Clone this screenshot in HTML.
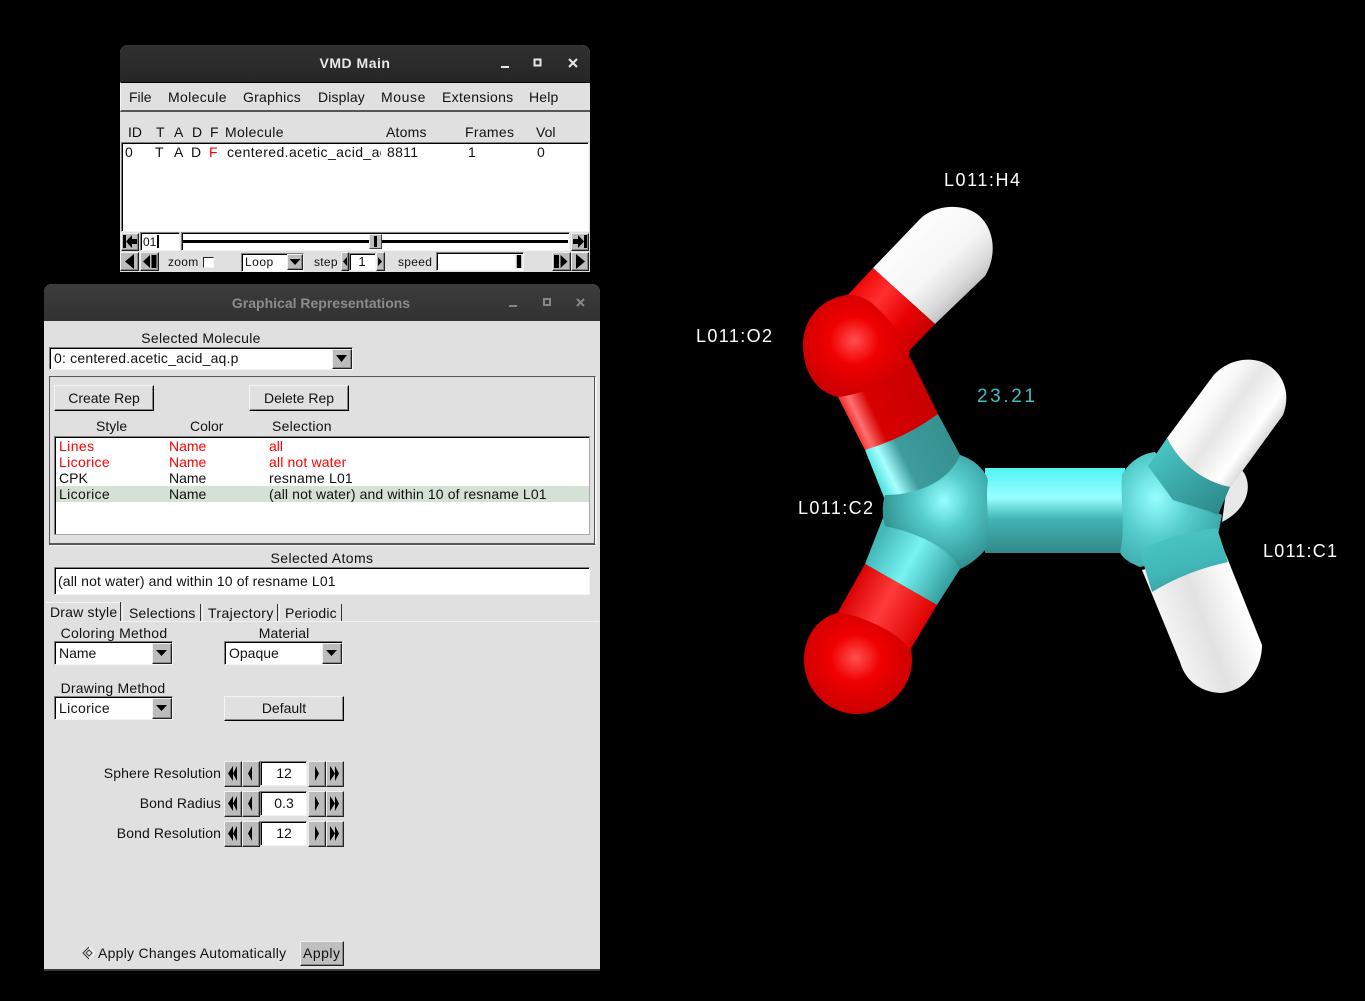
<!DOCTYPE html>
<html><head><meta charset="utf-8"><title>VMD</title>
<style>
html,body{margin:0;padding:0;background:#000;width:1365px;height:1001px;overflow:hidden}
*{box-sizing:border-box}
#r{position:absolute;left:0;top:0;width:1365px;height:1001px;overflow:hidden;font-family:"Liberation Sans",sans-serif;font-size:14px;color:#111}
.a{position:absolute}
.t{position:absolute;white-space:nowrap;line-height:16px;height:16px}
.c{transform:translateX(-50%)}
.rt{transform:translateX(-100%)}
.rd{color:#f00}
.s{font-size:12px}
.in{position:absolute;background:#fff;border:1px solid;border-color:#808080 #f4f4f4 #f4f4f4 #808080;box-shadow:inset 1px 1px 0 #000}
.b{position:absolute;background:#e0e0e0;border:1px solid;border-color:#f4f4f4 #000 #000 #f4f4f4;box-shadow:inset -1px -1px 0 #888}
.g{position:absolute;background:#bcbcbc;border:1px solid;border-color:#f0f0f0 #222 #222 #f0f0f0;box-shadow:inset -1px -1px 0 #888}
</style></head><body><div id="r">

<!-- 3D molecule -->
<svg class="a" style="left:0;top:0" width="1365" height="1001">
<defs>
<linearGradient id="wh" gradientUnits="userSpaceOnUse" x1="900" y1="225" x2="965" y2="295"><stop offset="0" stop-color="#fff"/><stop offset=".6" stop-color="#f6f6f6"/><stop offset=".85" stop-color="#ddd"/><stop offset="1" stop-color="#c4c4c4"/></linearGradient>
<linearGradient id="rh" gradientUnits="userSpaceOnUse" x1="855" y1="280" x2="925" y2="335"><stop offset="0" stop-color="#e00"/><stop offset=".35" stop-color="#ff3030"/><stop offset=".7" stop-color="#e80000"/><stop offset="1" stop-color="#c80000"/></linearGradient>
<linearGradient id="ro" gradientUnits="userSpaceOnUse" x1="845" y1="425" x2="925" y2="388"><stop offset="0" stop-color="#e00"/><stop offset=".17" stop-color="#ff7070"/><stop offset=".36" stop-color="#d80000"/><stop offset="1" stop-color="#c80000"/></linearGradient>
<linearGradient id="co" gradientUnits="userSpaceOnUse" x1="873" y1="473" x2="950" y2="435"><stop offset="0" stop-color="#50e0e0"/><stop offset=".17" stop-color="#a8ffff"/><stop offset=".4" stop-color="#3d9c9c"/><stop offset="1" stop-color="#379090"/></linearGradient>
<linearGradient id="co2" gradientUnits="userSpaceOnUse" x1="875" y1="545" x2="950" y2="588"><stop offset="0" stop-color="#45b8b8"/><stop offset=".45" stop-color="#78f2f2"/><stop offset="1" stop-color="#329a9a"/></linearGradient>
<linearGradient id="ro2" gradientUnits="userSpaceOnUse" x1="850" y1="587" x2="925" y2="627"><stop offset="0" stop-color="#d80000"/><stop offset=".45" stop-color="#ff3a3a"/><stop offset="1" stop-color="#d00"/></linearGradient>
<linearGradient id="cc" x1="0" y1="0" x2="0" y2="1"><stop offset="0" stop-color="#50f4f4"/><stop offset=".35" stop-color="#98ffff"/><stop offset=".6" stop-color="#42b4b4"/><stop offset="1" stop-color="#338888"/></linearGradient>
<linearGradient id="wu" gradientUnits="userSpaceOnUse" x1="1190" y1="395" x2="1260" y2="445"><stop offset="0" stop-color="#fff"/><stop offset=".25" stop-color="#fafafa"/><stop offset=".5" stop-color="#e6e6e6"/><stop offset=".85" stop-color="#fff"/><stop offset="1" stop-color="#ddd"/></linearGradient>
<linearGradient id="cu" gradientUnits="userSpaceOnUse" x1="1160" y1="445" x2="1215" y2="510"><stop offset="0" stop-color="#48c4c4"/><stop offset="1" stop-color="#2f8c8c"/></linearGradient>
<linearGradient id="wl" gradientUnits="userSpaceOnUse" x1="1165" y1="640" x2="1245" y2="610"><stop offset="0" stop-color="#f6f6f6"/><stop offset=".5" stop-color="#e2e2e2"/><stop offset="1" stop-color="#fff"/></linearGradient>
<linearGradient id="cl" gradientUnits="userSpaceOnUse" x1="1175" y1="530" x2="1190" y2="590"><stop offset="0" stop-color="#4ac4c4"/><stop offset=".6" stop-color="#42b8b8"/><stop offset="1" stop-color="#36a0a0"/></linearGradient>
<radialGradient id="s1" cx=".48" cy=".45" r=".58"><stop offset="0" stop-color="#ff5050"/><stop offset=".4" stop-color="#f00000"/><stop offset="1" stop-color="#c80000"/></radialGradient>
<radialGradient id="k1" cx=".58" cy=".4" r=".62"><stop offset="0" stop-color="#96ffff"/><stop offset=".4" stop-color="#55cccc"/><stop offset="1" stop-color="#2f8e8e"/></radialGradient>
<radialGradient id="k2" cx=".35" cy=".4" r=".7"><stop offset="0" stop-color="#96ffff"/><stop offset=".5" stop-color="#55cccc"/><stop offset="1" stop-color="#3aa6a6"/></radialGradient>
</defs>

<!-- back hydrogen -->
<path d="M1230 462C1254 470 1256 505 1222 522Z" fill="#e8e8e8"/>

<!-- O-H upper -->
<path d="M873 268L921 218C935 205 962 203 977 214C994 227 998 254 985 276L935 324Z" fill="url(#wh)"/>
<path d="M873 268L935 324L905 355L870 350L845 298Z" fill="url(#rh)"/>

<!-- O2-C2 bond -->
<path d="M865 450L938 414L960 455L985 480L885 500Z" fill="url(#co)"/>
<path d="M838 397L905 350L912 361L938 414Q905 438 865 450Z" fill="url(#ro)"/>

<!-- O2 sphere -->
<path d="M803 345C803 318 822 300 842 296C852 292 866 298 873 304C888 318 903 335 910 352C906 368 893 374 885 381C870 390 855 395 838 397C815 392 803 370 803 345Z" fill="url(#s1)"/>

<!-- C2-O1 bond -->
<path d="M888 505L975 545L960 569L937 605L865 564Z" fill="url(#co2)"/>
<path d="M865 564L937 605L910 650L838 612Z" fill="url(#ro2)"/>
<path d="M804 660C804 632 822 616 840 612C865 618 895 630 911 650C918 685 887 714 857 714C828 714 804 690 804 660Z" fill="url(#s1)"/>

<!-- C1-H lower -->
<path d="M1142 570L1222 545L1262 645C1262 670 1245 692 1220 693C1200 692 1185 680 1180 662Z" fill="url(#wl)"/>

<!-- C1-H upper white -->
<path d="M1167 438L1213 376C1225 362 1245 356 1262 362C1282 370 1292 392 1283 415L1230 488C1205 482 1180 465 1167 438Z" fill="url(#wu)"/>

<!-- C-C bond -->
<rect x="985" y="468" width="140" height="85" fill="url(#cc)"/>

<!-- C1 blob -->
<path d="M1122 474C1130 462 1140 454 1155 452L1200 505L1222 515L1218 535L1175 560L1140 567C1130 563 1122 558 1120 552C1126 530 1120 500 1122 474Z" fill="url(#k2)"/>
<!-- C1 bands -->
<path d="M1167 438C1180 465 1205 482 1230 487L1218 515L1208 511L1173 500L1148 466Z" fill="url(#cu)"/>
<path d="M1140 552C1165 535 1195 532 1217 528L1228 562C1200 568 1175 578 1152 592Z" fill="url(#cl)"/>

<!-- C2 blob -->
<path d="M960 455C975 460 985 470 988 480C985 500 990 520 987 548C980 556 970 565 960 569C950 550 925 535 885 526C882 515 882 505 885 495C920 495 950 480 960 455Z" fill="url(#k1)"/>

<!-- labels -->
<g fill="#fff" font-family="'Liberation Sans',sans-serif" font-size="18">
<text x="944" y="186" textLength="76" lengthAdjust="spacing">L011:H4</text>
<text x="696" y="342" textLength="76" lengthAdjust="spacing">L011:O2</text>
<text x="798" y="514" textLength="75" lengthAdjust="spacing">L011:C2</text>
<text x="1263" y="557" textLength="74" lengthAdjust="spacing">L011:C1</text>
<text x="977" y="402" textLength="58" lengthAdjust="spacing" font-size="19" fill="#3cc0c0">23.21</text>
</g>
</svg>

<!-- VMD Main -->
<div class="a" style="left:120px;top:45px;width:470px;height:227px;background:#e0e0e0;border-radius:8px 8px 0 0;overflow:hidden">
  <div class="a" style="left:0;top:0;width:470px;height:37px;background:linear-gradient(#303030,#262626)"></div>
  <div class="a" style="left:0;top:37px;width:470px;height:30px;border-top:1px solid #000;border-bottom:2px solid #555;border-left:1px solid #f4f4f4;background:#e0e0e0"></div>
</div>
<span class="t c" style="left:355px;top:55px;color:#e8e8e8;font-weight:bold;letter-spacing:.5px">VMD Main</span>
<svg class="a" style="left:495px;top:55px" width="90" height="18"><rect x="6" y="11" width="8" height="2" fill="#e8e8e8"/><rect x="39.500" y="4.500" width="6" height="6" fill="none" stroke="#e8e8e8" stroke-width="2"/><path d="M74 4L82 12M82 4L74 12" stroke="#e8e8e8" stroke-width="2"/></svg>

<span class="t" style="left:129px;top:89px">File</span>
<span class="t" style="left:168px;top:89px;letter-spacing:.35px">Molecule</span>
<span class="t" style="left:243px;top:89px;letter-spacing:.25px">Graphics</span>
<span class="t" style="left:318px;top:89px;letter-spacing:.15px">Display</span>
<span class="t" style="left:381px;top:89px;letter-spacing:.6px">Mouse</span>
<span class="t" style="left:442px;top:89px;letter-spacing:.3px">Extensions</span>
<span class="t" style="left:529px;top:89px;letter-spacing:.15px">Help</span>

<span class="t" style="left:128px;top:124px">ID</span>
<span class="t" style="left:156px;top:124px">T</span>
<span class="t" style="left:174px;top:124px">A</span>
<span class="t" style="left:192px;top:124px">D</span>
<span class="t" style="left:210px;top:124px">F</span>
<span class="t" style="left:225px;top:124px;letter-spacing:.35px">Molecule</span>
<span class="t" style="left:386px;top:124px;letter-spacing:.2px">Atoms</span>
<span class="t" style="left:465px;top:124px;letter-spacing:.3px">Frames</span>
<span class="t" style="left:536px;top:124px">Vol</span>

<div class="in" style="left:121px;top:142px;width:468px;height:90px"></div>
<span class="t" style="left:125px;top:144px;width:9px;overflow:hidden">0</span>
<span class="t" style="left:155px;top:144px">T</span>
<span class="t" style="left:174px;top:144px">A</span>
<span class="t" style="left:191px;top:144px">D</span>
<span class="t rd" style="left:209px;top:144px">F</span>
<span class="t" style="left:227px;top:144px;width:154px;overflow:hidden;letter-spacing:.4px">centered.acetic_acid_aq.psf</span>
<span class="t" style="left:387px;top:144px;letter-spacing:.3px">8811</span>
<span class="t" style="left:468px;top:144px">1</span>
<span class="t" style="left:537px;top:144px">0</span>

<!-- row 1 -->
<div class="g" style="left:121px;top:233px;width:18px;height:18px"></div>
<svg class="a" style="left:121px;top:233px" width="18" height="18"><path d="M2 2h3v13H2zM5 8.500L11 2v4h5v5h-5v4z" fill="#000"/></svg>
<div class="in" style="left:140px;top:232px;width:40px;height:19px"></div>
<span class="t s" style="left:143px;top:234px">01</span>
<div class="a" style="left:157px;top:235px;width:2px;height:13px;background:#000"></div>
<div class="in" style="left:181px;top:232px;width:389px;height:19px"></div>
<div class="a" style="left:183px;top:240px;width:385px;height:3px;background:#000"></div>
<div class="a" style="left:369px;top:234px;width:13px;height:15px;background:#bdbdbd;border:1px solid #eee;border-right-color:#444;border-bottom-color:#444"></div>
<div class="a" style="left:374px;top:236px;width:3px;height:11px;background:#000"></div>
<div class="g" style="left:571px;top:233px;width:18px;height:18px"></div>
<svg class="a" style="left:571px;top:233px" width="18" height="18"><path d="M13 2h3v13h-3zM13 8.500L7 2v4H2v5h5v4z" fill="#000"/></svg>

<!-- row 2 -->
<div class="g" style="left:120px;top:252px;width:19px;height:19px"></div>
<svg class="a" style="left:120px;top:252px" width="19" height="19"><path d="M5 9.500L14 2v15z" fill="#000"/></svg>
<div class="g" style="left:140px;top:252px;width:19px;height:19px"></div>
<svg class="a" style="left:140px;top:252px" width="19" height="19"><path d="M3 9.500L10 3v13zM11.500 3h5v13h-5z" fill="#000"/></svg>
<span class="t s" style="left:168px;top:254px;letter-spacing:.3px">zoom</span>
<div class="in" style="left:203px;top:257px;width:11px;height:11px;box-shadow:none;border-color:#222 #f4f4f4 #f4f4f4 #222"></div>
<div class="in" style="left:241px;top:253px;width:63px;height:19px"></div>
<span class="t s" style="left:245px;top:254px;letter-spacing:.5px">Loop</span>
<div class="g" style="left:287px;top:254px;width:16px;height:16px"></div>
<svg class="a" style="left:287px;top:254px" width="16" height="16"><path d="M2.500 5h11L8 11z" fill="#000"/></svg>
<span class="t s" style="left:314px;top:254px;letter-spacing:.3px">step</span>
<div class="g" style="left:341px;top:252px;width:8px;height:19px"></div>
<svg class="a" style="left:341px;top:252px" width="8" height="19"><path d="M2 9.500L6 5v9z" fill="#000"/></svg>
<div class="in" style="left:349px;top:253px;width:27px;height:18px"></div>
<span class="t c" style="left:362px;top:254px;font-size:13px">1</span>
<div class="g" style="left:376px;top:252px;width:9px;height:19px"></div>
<svg class="a" style="left:376px;top:252px" width="9" height="19"><path d="M6 9.500L2 5v9z" fill="#000"/></svg>
<span class="t s" style="left:398px;top:254px;letter-spacing:.3px">speed</span>
<div class="in" style="left:436px;top:252px;width:88px;height:19px"></div>
<div class="a" style="left:515px;top:254px;width:8px;height:15px;background:#bdbdbd;border:1px solid #eee"></div>
<div class="a" style="left:517px;top:255px;width:4px;height:13px;background:#000"></div>
<div class="g" style="left:552px;top:252px;width:19px;height:19px"></div>
<svg class="a" style="left:552px;top:252px" width="19" height="19"><path d="M2 3h5v13H2zM8.500 3l7 6.500-7 6.500z" fill="#000"/></svg>
<div class="g" style="left:571px;top:252px;width:18px;height:19px"></div>
<svg class="a" style="left:571px;top:252px" width="18" height="19"><path d="M14 9.500L5 2v15z" fill="#000"/></svg>

<!-- Graphical Representations -->
<div class="a" style="left:44px;top:284px;width:556px;height:687px;background:#e0e0e0;border-radius:8px 8px 0 0;overflow:hidden;border-bottom:2px solid #3a3a3a">
  <div class="a" style="left:0;top:0;width:556px;height:37px;background:linear-gradient(#3c3c3c,#323232)"></div>
</div>
<span class="t c" style="left:321px;top:295px;color:#8c8c8c;font-weight:bold">Graphical Representations</span>
<svg class="a" style="left:500px;top:294px" width="90" height="18"><rect x="9" y="11" width="8" height="2" fill="#888"/><rect x="44" y="5" width="6" height="6" fill="none" stroke="#888" stroke-width="2"/><path d="M77 5L84 12M84 5L77 12" stroke="#888" stroke-width="2"/></svg>

<span class="t c" style="left:201px;top:330px;letter-spacing:.3px">Selected Molecule</span>
<div class="in" style="left:49px;top:347px;width:304px;height:23px"></div>
<span class="t" style="left:54px;top:350px;letter-spacing:.2px">0: centered.acetic_acid_aq.p</span>
<div class="g" style="left:332px;top:349px;width:20px;height:20px"></div>
<svg class="a" style="left:332px;top:349px" width="20" height="20"><path d="M4 6h11l-5.500 7z" fill="#000"/></svg>

<div class="a" style="left:49px;top:376px;width:547px;height:169px;border:1px solid;border-color:#555 #f4f4f4 #555 #555;box-shadow:inset -1px -1px 0 #555,1px 1px 0 #f4f4f4"></div>
<div class="b" style="left:54px;top:385px;width:100px;height:26px"></div>
<span class="t c" style="left:104px;top:390px">Create Rep</span>
<div class="b" style="left:249px;top:385px;width:100px;height:26px"></div>
<span class="t c" style="left:299px;top:390px">Delete Rep</span>
<span class="t" style="left:96px;top:418px">Style</span>
<span class="t" style="left:190px;top:418px">Color</span>
<span class="t" style="left:272px;top:418px;letter-spacing:.25px">Selection</span>

<div class="in" style="left:54px;top:436px;width:536px;height:99px;border-color:#808080 #aaa #aaa #808080"></div>
<div class="a" style="left:56px;top:486px;width:533px;height:16px;background:#d4e1d4"></div>
<span class="t rd" style="left:59px;top:438px;letter-spacing:.4px">Lines</span><span class="t rd" style="left:169px;top:438px">Name</span><span class="t rd" style="left:269px;top:438px">all</span>
<span class="t rd" style="left:59px;top:454px;letter-spacing:.35px">Licorice</span><span class="t rd" style="left:169px;top:454px">Name</span><span class="t rd" style="left:269px;top:454px;letter-spacing:.15px">all not water</span>
<span class="t" style="left:59px;top:470px">CPK</span><span class="t" style="left:169px;top:470px">Name</span><span class="t" style="left:269px;top:470px;letter-spacing:.2px">resname L01</span>
<span class="t" style="left:59px;top:486px;letter-spacing:.35px">Licorice</span><span class="t" style="left:169px;top:486px">Name</span><span class="t" style="left:269px;top:486px;letter-spacing:.12px">(all not water) and within 10 of resname L01</span>

<span class="t c" style="left:322px;top:550px;letter-spacing:.4px">Selected Atoms</span>
<div class="in" style="left:54px;top:567px;width:536px;height:28px"></div>
<span class="t" style="left:58px;top:573px;letter-spacing:.12px">(all not water) and within 10 of resname L01</span>

<!-- tabs -->
<div class="a" style="left:46px;top:621px;width:553px;height:1px;background:#f0f0f0"></div>
<div class="a" style="left:120px;top:602px;width:1px;height:19px;background:#333"></div>
<div class="a" style="left:122px;top:604px;width:1px;height:17px;background:#f4f4f4"></div>
<div class="a" style="left:200px;top:604px;width:1px;height:17px;background:#333"></div>
<div class="a" style="left:202px;top:604px;width:1px;height:17px;background:#f4f4f4"></div>
<div class="a" style="left:277px;top:604px;width:1px;height:17px;background:#333"></div>
<div class="a" style="left:279px;top:604px;width:1px;height:17px;background:#f4f4f4"></div>
<div class="a" style="left:341px;top:604px;width:1px;height:17px;background:#333"></div>
<div class="a" style="left:46px;top:602px;width:74px;height:1px;background:#f4f4f4"></div>
<div class="a" style="left:46px;top:621px;width:74px;height:1px;background:#e0e0e0"></div>
<span class="t" style="left:50px;top:604px;letter-spacing:.2px">Draw style</span>
<span class="t" style="left:129px;top:605px;letter-spacing:.2px">Selections</span>
<span class="t" style="left:208px;top:605px;letter-spacing:.4px">Trajectory</span>
<span class="t" style="left:285px;top:605px;letter-spacing:.15px">Periodic</span>

<span class="t c" style="left:114px;top:625px;letter-spacing:.27px">Coloring Method</span>
<span class="t c" style="left:284px;top:625px;letter-spacing:.1px">Material</span>
<div class="in" style="left:54px;top:641px;width:119px;height:24px"></div>
<span class="t" style="left:59px;top:645px">Name</span>
<div class="g" style="left:152px;top:643px;width:20px;height:21px"></div>
<svg class="a" style="left:152px;top:643px" width="20" height="21"><path d="M4 7h11l-5.500 6z" fill="#000"/></svg>
<div class="in" style="left:224px;top:641px;width:119px;height:24px"></div>
<span class="t" style="left:229px;top:645px">Opaque</span>
<div class="g" style="left:322px;top:643px;width:20px;height:21px"></div>
<svg class="a" style="left:322px;top:643px" width="20" height="21"><path d="M4 7h11l-5.500 6z" fill="#000"/></svg>

<span class="t c" style="left:113px;top:680px;letter-spacing:.2px">Drawing Method</span>
<div class="in" style="left:54px;top:696px;width:119px;height:24px"></div>
<span class="t" style="left:59px;top:700px;letter-spacing:.35px">Licorice</span>
<div class="g" style="left:152px;top:698px;width:20px;height:21px"></div>
<svg class="a" style="left:152px;top:698px" width="20" height="21"><path d="M4 7h11l-5.500 6z" fill="#000"/></svg>
<div class="b" style="left:224px;top:696px;width:120px;height:25px"></div>
<span class="t c" style="left:284px;top:700px">Default</span>

<!-- counters -->
<span class="t rt" style="left:221px;top:765px;letter-spacing:.12px">Sphere Resolution</span>
<div class="g" style="left:224px;top:761px;width:18px;height:26px"></div>
<div class="g" style="left:242px;top:761px;width:18px;height:26px"></div>
<div class="in" style="left:260px;top:761px;width:47px;height:25px"></div>
<span class="t c" style="left:284px;top:765px">12</span>
<div class="g" style="left:308px;top:761px;width:18px;height:26px"></div>
<div class="g" style="left:326px;top:761px;width:18px;height:26px"></div>
<svg class="a" style="left:224px;top:761px" width="120" height="26"><path d="M4 12.500L9 5v15zM9 12.500L13 5v15zM24 12.500L28 5v15zM91 5l4 7.500-4 7.500zM106 5l5 7.500-5 7.500zM111 5l4 7.500-4 7.500z" fill="#000"/></svg>

<span class="t rt" style="left:221px;top:795px;letter-spacing:.1px">Bond Radius</span>
<div class="g" style="left:224px;top:791px;width:18px;height:26px"></div>
<div class="g" style="left:242px;top:791px;width:18px;height:26px"></div>
<div class="in" style="left:260px;top:791px;width:47px;height:25px"></div>
<span class="t c" style="left:284px;top:795px">0.3</span>
<div class="g" style="left:308px;top:791px;width:18px;height:26px"></div>
<div class="g" style="left:326px;top:791px;width:18px;height:26px"></div>
<svg class="a" style="left:224px;top:791px" width="120" height="26"><path d="M4 12.500L9 5v15zM9 12.500L13 5v15zM24 12.500L28 5v15zM91 5l4 7.500-4 7.500zM106 5l5 7.500-5 7.500zM111 5l4 7.500-4 7.500z" fill="#000"/></svg>

<span class="t rt" style="left:221px;top:825px;letter-spacing:.1px">Bond Resolution</span>
<div class="g" style="left:224px;top:821px;width:18px;height:26px"></div>
<div class="g" style="left:242px;top:821px;width:18px;height:26px"></div>
<div class="in" style="left:260px;top:821px;width:47px;height:25px"></div>
<span class="t c" style="left:284px;top:825px">12</span>
<div class="g" style="left:308px;top:821px;width:18px;height:26px"></div>
<div class="g" style="left:326px;top:821px;width:18px;height:26px"></div>
<svg class="a" style="left:224px;top:821px" width="120" height="26"><path d="M4 12.500L9 5v15zM9 12.500L13 5v15zM24 12.500L28 5v15zM91 5l4 7.500-4 7.500zM106 5l5 7.500-5 7.500zM111 5l4 7.500-4 7.500z" fill="#000"/></svg>

<!-- bottom -->
<svg class="a" style="left:82px;top:946px" width="14" height="14"><path d="M7 1L13 7L7 13L1 7Z" fill="#e0e0e0" stroke="#fff"/><path d="M7 1L1 7L7 13" fill="none" stroke="#333"/><path d="M7 4L10 7L7 10L4 7Z" fill="#e0e0e0" stroke="#444"/></svg>
<span class="t" style="left:98px;top:945px;letter-spacing:.26px">Apply Changes Automatically</span>
<div class="g" style="left:300px;top:941px;width:44px;height:25px;background:#bfbfbf"></div>
<span class="t" style="left:303px;top:945px;letter-spacing:.5px">Apply</span>

</div></body></html>
